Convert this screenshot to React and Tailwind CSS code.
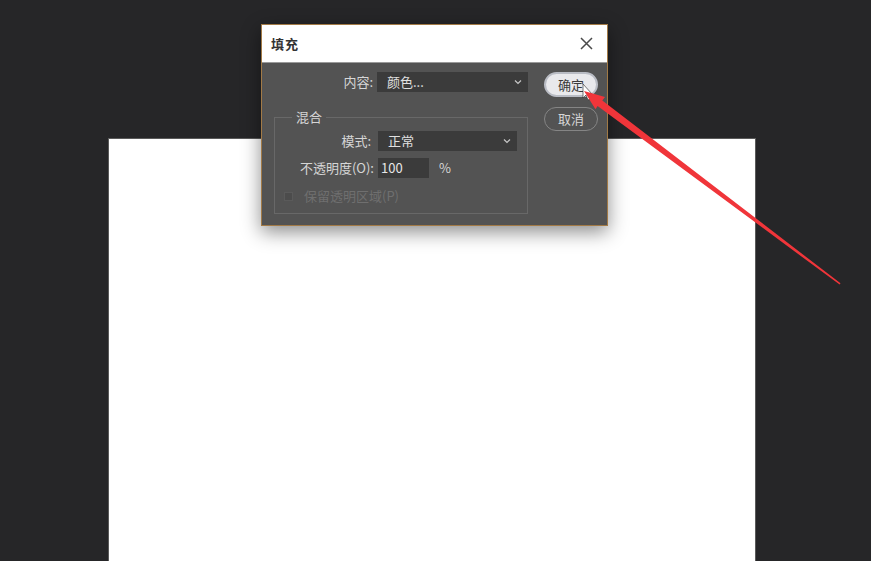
import React from "react";

const font = { fontFamily: '"Noto Sans CJK SC", "Noto Sans", sans-serif' };

function Chevron() {
  return (
    <svg width="8" height="6" viewBox="0 0 8 6" className="shrink-0">
      <path d="M1 1.5 L4 4.5 L7 1.5" fill="none" stroke="#c8c8c8" strokeWidth="1.2" />
    </svg>
  );
}

export default function App() {
  return (
    <div
      className="relative w-[871px] h-[561px] overflow-hidden bg-[#262628] pt-[138px] pl-[108px]"
      style={font}
    >
      {/* white canvas */}
      <div className="w-[648px] h-[430px] bg-white border border-[#5a5a5a]" />

      {/* dialog */}
      <div className="absolute left-[261px] top-[24px] w-[347px] h-[202px] border border-[#a27a46] bg-[#535353] shadow-[0_6px_18px_rgba(0,0,0,0.45)] flex flex-col">
        <div className="h-[38px] bg-white flex items-center justify-between pl-[9px] pr-[14px] border-b border-[#9a9a9a]">
          <span className="text-[13px] font-bold text-[#333] tracking-[1px]">填充</span>
          <svg width="13" height="13" viewBox="0 0 13 13">
            <path d="M1 1 L12 12 M12 1 L1 12" stroke="#4a4a4a" strokeWidth="1.5" />
          </svg>
        </div>

        <div className="flex pl-[12px] pt-[9px] pr-[9px] text-[13px] leading-[16px] text-[#d6d6d6]">
          {/* left column */}
          <div className="w-[254px] flex flex-col">
            <div className="flex items-center justify-end gap-[4px] h-[20px]">
              <span>内容:</span>
              <div className="w-[151px] h-[20px] bg-[#3b3b3b] flex items-center justify-between pl-[10px] pr-[6px]">
                <span className="text-[#e0e0e0]">颜色...</span>
                <Chevron />
              </div>
            </div>

            <fieldset className="mt-[18px] border border-[#686868] h-[104px] pl-[1px] pr-[10px]">
              <legend className="ml-[16px] px-[4px] text-[13px] leading-[14px] text-[#d6d6d6]">混合</legend>
              <div className="flex items-center mt-[7px] h-[20px]">
                <span className="w-[95px] text-right">模式:</span>
                <div className="ml-[7px] flex-1 h-[20px] bg-[#3b3b3b] flex items-center justify-between pl-[10px] pr-[6px]">
                  <span className="text-[#e0e0e0]">正常</span>
                  <Chevron />
                </div>
              </div>
              <div className="flex items-center mt-[7px] h-[20px]">
                <span className="w-[98px] text-right whitespace-nowrap">不透明度(O):</span>
                <div className="ml-[4px] w-[51px] h-[20px] bg-[#3b3b3b] flex items-center pl-[3px] text-[#e6e6e6]">
                  100
                </div>
                <span className="ml-[10px]">%</span>
              </div>
              <div className="flex items-center mt-[11px] h-[14px] pl-[8px]">
                <span className="w-[9px] h-[9px] bg-[#4c4c4c] border border-[#5a5a5a]" />
                <span className="ml-[11px] text-[#6f6f6f]">保留透明区域(P)</span>
              </div>
            </fieldset>
          </div>

          {/* buttons */}
          <div className="ml-[16px] w-[54px] flex flex-col gap-[10px]">
            <div className="h-[25px] rounded-full bg-[#e9e9ec] border-2 border-[#b9bcc4] flex items-center justify-center text-[#3a3a3a]">
              确定
            </div>
            <div className="h-[24px] rounded-full border border-[#858585] flex items-center justify-center text-[#d6d6d6]">
              取消
            </div>
          </div>
        </div>
      </div>

      {/* cursor + red arrow annotation */}
      <svg className="absolute left-0 top-0" width="871" height="561" viewBox="0 0 871 561">
        <path d="M583 84 L583 98 L586 95 L588 100 L590 99 L588 94 L592 94 Z" fill="#ffffff" stroke="#222" strokeWidth="0.6" />
        <polygon
          points="584,91 605,97 602.3,100.6 840.5,283.3 839.6,284.6 597.6,106.1 595.5,109.2"
          fill="#f0353a"
        />
      </svg>
    </div>
  );
}
